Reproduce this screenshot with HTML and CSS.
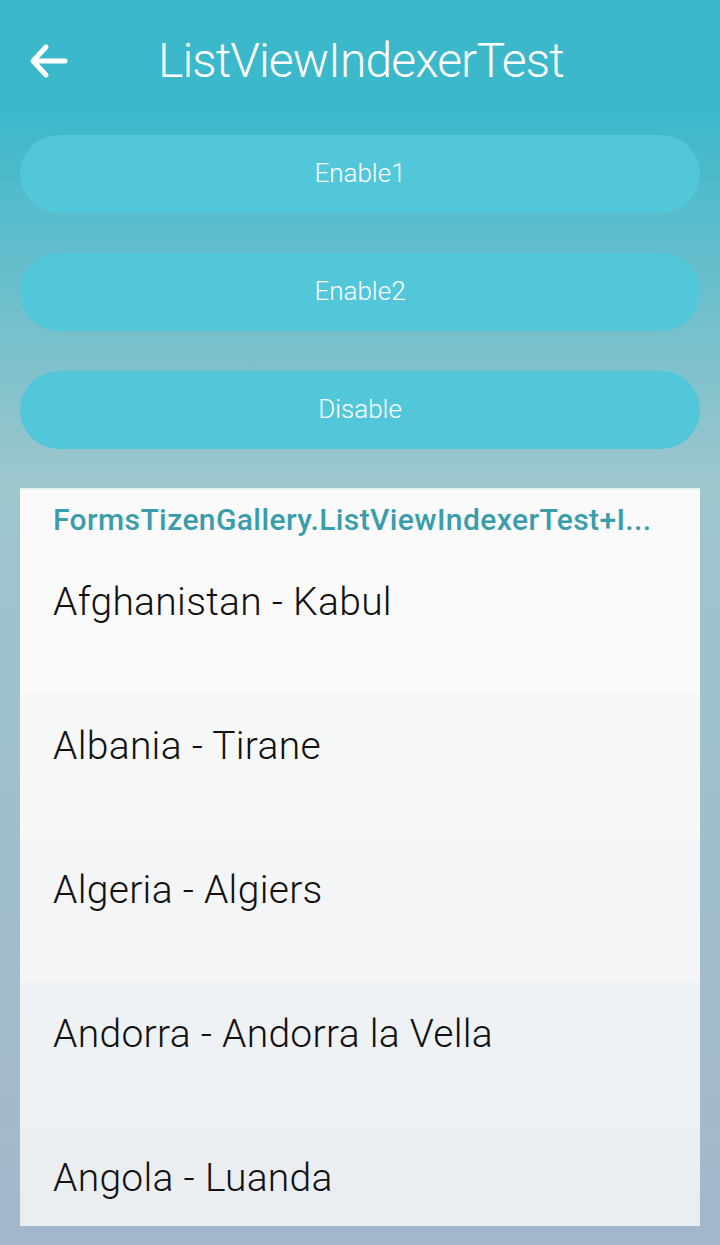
FILE: index.html
```html
<!DOCTYPE html>
<html>
<head>
<meta charset="utf-8">
<link rel="stylesheet" href="styles.css">
</head>
<body>
<div class="screen">
  <header class="appbar">
    <svg class="back" width="40" height="36" viewBox="0 0 40 36">
      <path d="M37 18 H6 M18 4 L5 18 L18 32" fill="none" stroke="#fff" stroke-width="5" stroke-linecap="round" stroke-linejoin="round"/>
    </svg>
    <h1 class="title">ListViewIndexerTest</h1>
  </header>
  <div class="buttons">
    <div class="btn">Enable1</div>
    <div class="btn">Enable2</div>
    <div class="btn">Disable</div>
  </div>
  <div class="list">
    <div class="group">
      <div class="group-title">FormsTizenGallery.ListViewIndexerTest+I...</div>
      <div class="item first">Afghanistan - Kabul</div>
    </div>
    <div class="row r2"><div class="item">Albania - Tirane</div></div>
    <div class="row r3"><div class="item">Algeria - Algiers</div></div>
    <div class="row r4"><div class="item">Andorra - Andorra la Vella</div></div>
    <div class="row r5 last"><div class="item">Angola - Luanda</div></div>
  </div>
</div>
</body>
</html>
```
FILE: styles.css
```css
html, body {
  margin: 0;
  padding: 0;
}
body {
  width: 720px;
  height: 1245px;
  overflow: hidden;
  font-family: Roboto, "Liberation Sans", sans-serif;
  background: linear-gradient(to bottom, #3cb8cb 0px, #3cb8cb 110px, #9dc6cd 480px, #a3b6cb 1245px);
}
.screen {
  display: flex;
  flex-direction: column;
  height: 1245px;
}
.appbar {
  height: 118px;
  display: flex;
  align-items: center;
  box-sizing: border-box;
  padding: 0 0 0 28px;
}
.back {
  display: block;
  margin-top: 4px;
}
.title {
  margin: 0 0 0 90px;
  font-weight: 300;
  font-size: 48px;
  color: #fff;
  letter-spacing: -0.9px;
  line-height: 1;
  padding-top: 4px;
}
.buttons {
  display: flex;
  flex-direction: column;
  gap: 40px;
  padding: 17px 20px 0;
}
.btn {
  height: 78px;
  border-radius: 39px;
  background: #52c7d9;
  color: #fff;
  font-weight: 300;
  font-size: 26px;
  display: flex;
  align-items: center;
  justify-content: center;
  padding-bottom: 2px;
  box-sizing: border-box;
}
.list {
  margin: 39px 20px 0;
  display: flex;
  flex-direction: column;
}
.group {
  background: #fafafa;
  border-top: 2px solid #e0f3f5;
  height: 207px;
  box-sizing: border-box;
}
.group-title {
  color: #3a9dab;
  font-weight: 500;
  font-size: 30px;
  padding: 12px 0 0 33px;
  line-height: 36px;
  letter-spacing: 0.4px;
  white-space: nowrap;
}
.item {
  font-weight: 300;
  font-size: 39px;
  color: #111;
  padding-left: 33px;
  line-height: 44px;
  letter-spacing: 0.3px;
}
.item.first {
  padding-top: 42px;
}
.row {
  height: 144px;
  box-sizing: border-box;
  padding-top: 29px;
}
.r2 { background: #f6f7f7; }
.r3 { background: #f3f5f6; }
.r4 { background: #eff2f4; }
.r5 { background: #ebeef1; height: 99px; }
```
